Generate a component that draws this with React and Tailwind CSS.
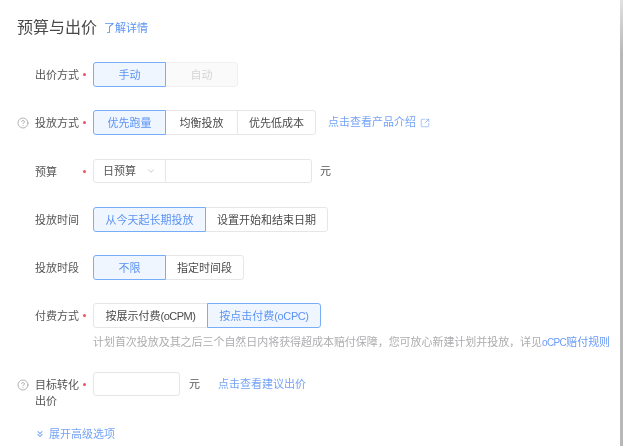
import React from 'react';
import { ChevronDown, ChevronsDown, CircleHelp, SquareArrowOutUpRight } from 'lucide-react';

const fontStack = 'font-["Liberation_Sans","Noto_Sans_CJK_SC",sans-serif]';

const Segment = ({ items, widths, active, disabled }) => (
  <div className="flex h-[25px]">
    {items.map((item, idx) => {
      const isActive = idx === active;
      const isDisabled = idx === disabled;
      let tone = 'border-[#e6e6e8] bg-white text-[#4a4a4a]';
      if (isActive) tone = 'border-[#78aef8] bg-[#f0f6ff] text-[#5b93f5] z-10';
      if (isDisabled) tone = 'border-[#f0f0f2] bg-[#fafafa] text-[#d5d5d8]';
      return (
        <div
          key={idx}
          style={{ width: widths[idx] }}
          className={`flex items-center justify-center border pt-px text-[11px] ${tone} ${idx > 0 ? '-ml-px' : ''} ${idx === 0 ? 'rounded-l-[3px]' : ''} ${idx === items.length - 1 ? 'rounded-r-[3px]' : ''}`}
        >
          {item}
        </div>
      );
    })}
  </div>
);

const Row = ({ label, required, help, className, children }) => (
  <div className={`flex items-start ${className}`}>
    <div className="flex h-[25px] w-[35px] shrink-0 items-center pl-[17px]">
      {help && <CircleHelp className="h-[12px] w-[12px] text-[#999]" strokeWidth={1.5} />}
    </div>
    <div className="flex w-[58px] shrink-0">
      <div className="w-[48px] pr-[3px] pt-[5px] text-[11px] leading-[16px] text-[#555]">{label}</div>
      {required && <div className="flex h-[25px] items-center"><span className="h-[3px] w-[3px] rounded-full bg-[#f0505c]" /></div>}
    </div>
    {children}
  </div>
);

export default function App() {
  return (
    <div className={`relative h-[446px] w-[623px] overflow-hidden bg-white blur-[0.7px] ${fontStack}`}>
      <div className="flex items-center gap-[7px] pl-[17px] pt-[16px]">
        <h1 className="text-[16px] leading-[24px] text-[#4a4a4a]">预算与出价</h1>
        <a className="text-[11px] text-[#5b93f5]">了解详情</a>
      </div>

      <Row label="出价方式" required className="mt-[22px]">
        <Segment items={['手动', '自动']} widths={[73, 73]} active={0} disabled={1} />
      </Row>

      <Row label="投放方式" required help className="mt-[23px]">
        <Segment items={['优先跑量', '均衡投放', '优先低成本']} widths={[73, 73, 79]} active={0} />
        <a className="ml-[12px] flex h-[25px] items-center text-[11px] text-[#74a3f6]">
          点击查看产品介绍
          <SquareArrowOutUpRight className="ml-[4px] h-[10px] w-[10px]" strokeWidth={1.5} />
        </a>
      </Row>

      <Row label="预算" required className="mt-[24px]">
        <div className="flex h-[24px] w-[73px] items-center justify-between rounded-l-[3px] border border-[#e6e6e8] pl-[9px] pr-[9px] text-[11px] text-[#555]">
          日预算
          <ChevronDown className="h-[10px] w-[10px] text-[#aaa]" strokeWidth={1.5} />
        </div>
        <input className="-ml-px h-[24px] w-[147px] rounded-r-[3px] border border-[#e6e6e8] outline-none" />
        <span className="ml-[8px] flex h-[24px] items-center text-[11px] text-[#555]">元</span>
      </Row>

      <Row label="投放时间" className="mt-[23px]">
        <Segment items={['从今天起长期投放', '设置开始和结束日期']} widths={[113, 123]} active={0} />
      </Row>

      <Row label="投放时段" className="mt-[23px]">
        <Segment items={['不限', '指定时间段']} widths={[73, 79]} active={0} />
      </Row>

      <Row label="付费方式" required className="mt-[23px]">
        <Segment
          items={[
            <>按展示付费<span className="tracking-[-0.5px]">(oCPM)</span></>,
            <>按点击付费<span className="tracking-[-0.4px]">(oCPC)</span></>
          ]}
          widths={[115, 114]}
          active={1}
        />
      </Row>

      <p className="ml-[93px] mt-[6px] whitespace-nowrap text-[11px] leading-[16px] tracking-[-0.05px] text-[#adadb0]">
        计划首次投放及其之后三个自然日内将获得超成本赔付保障，您可放心新建计划并投放，详见<a className="text-[#6a9bf6]"><span className="text-[10px] tracking-[-0.6px]">oCPC</span>赔付规则</a>
      </p>

      <Row label="目标转化出价" required help className="mt-[21px]">
        <input className="h-[24px] w-[87px] rounded-[3px] border border-[#e6e6e8] outline-none" />
        <span className="ml-[9px] flex h-[24px] items-center text-[11px] text-[#555]">元</span>
        <a className="ml-[18px] flex h-[24px] items-center text-[11px] text-[#74a3f6]">点击查看建议出价</a>
      </Row>

      <div className="ml-[35px] mt-[17px] flex items-center gap-[4px] text-[11px] text-[#74a3f6]">
        <ChevronsDown className="h-[10px] w-[10px]" strokeWidth={2.5} />
        展开高级选项
      </div>

      <div className="absolute bottom-0 right-0 top-0 w-[3px] bg-linear-to-b from-[#e2e2e2] to-[#b8b8b8] to-[12%]" />
    </div>
  );
}
